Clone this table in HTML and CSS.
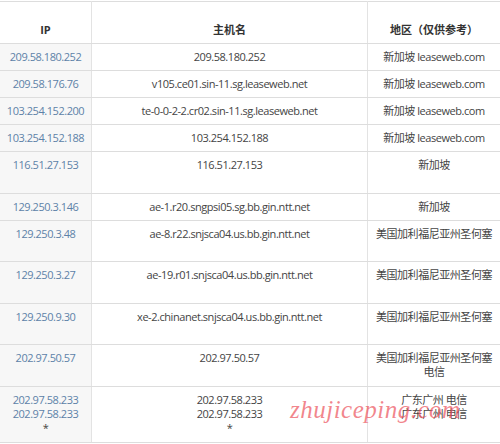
FILE: index.html
```html
<!DOCTYPE html>
<html lang="zh-CN">
<head>
<meta charset="utf-8">
<title>路由追踪</title>
<link rel="stylesheet" href="styles.css">
</head>
<body>
<div class="wrap">
<table class="trace">
  <thead>
    <tr><th class="c-ip">IP</th><th class="c-host">主机名</th><th class="c-loc">地区（仅供参考）</th></tr>
  </thead>
  <tbody>
    <tr><td class="c-ip"><a>209.58.180.252</a></td><td class="c-host">209.58.180.252</td><td class="c-loc">新加坡 leaseweb.com</td></tr>
    <tr><td class="c-ip"><a>209.58.176.76</a></td><td class="c-host">v105.ce01.sin-11.sg.leaseweb.net</td><td class="c-loc">新加坡 leaseweb.com</td></tr>
    <tr><td class="c-ip"><a>103.254.152.200</a></td><td class="c-host">te-0-0-2-2.cr02.sin-11.sg.leaseweb.net</td><td class="c-loc">新加坡 leaseweb.com</td></tr>
    <tr><td class="c-ip"><a>103.254.152.188</a></td><td class="c-host">103.254.152.188</td><td class="c-loc">新加坡 leaseweb.com</td></tr>
    <tr class="tall"><td class="c-ip"><a>116.51.27.153</a></td><td class="c-host">116.51.27.153</td><td class="c-loc">新加坡</td></tr>
    <tr><td class="c-ip"><a>129.250.3.146</a></td><td class="c-host">ae-1.r20.sngpsi05.sg.bb.gin.ntt.net</td><td class="c-loc">新加坡</td></tr>
    <tr class="tall"><td class="c-ip"><a>129.250.3.48</a></td><td class="c-host">ae-8.r22.snjsca04.us.bb.gin.ntt.net</td><td class="c-loc">美国加利福尼亚州圣何塞</td></tr>
    <tr class="tall"><td class="c-ip"><a>129.250.3.27</a></td><td class="c-host">ae-19.r01.snjsca04.us.bb.gin.ntt.net</td><td class="c-loc">美国加利福尼亚州圣何塞</td></tr>
    <tr class="tall"><td class="c-ip"><a>129.250.9.30</a></td><td class="c-host">xe-2.chinanet.snjsca04.us.bb.gin.ntt.net</td><td class="c-loc">美国加利福尼亚州圣何塞</td></tr>
    <tr class="tall"><td class="c-ip"><a>202.97.50.57</a></td><td class="c-host">202.97.50.57</td><td class="c-loc">美国加利福尼亚州圣何塞<br>电信</td></tr>
    <tr class="triple"><td class="c-ip"><a>202.97.58.233</a><br><a>202.97.58.233</a><br>*</td><td class="c-host">202.97.58.233<br>202.97.58.233<br>*</td><td class="c-loc">广东广州 电信<br>广东广州 电信</td></tr>
  </tbody>
</table>
<span class="watermark">zhujiceping.com</span>
</div>
</body>
</html>
```

FILE: styles.css
```css
html, body {
  margin: 0;
  padding: 0;
  background: #ffffff;
}
body {
  font-family: "Open Sans", "Noto Sans CJK SC", sans-serif;
  font-size: 11px;
  letter-spacing: -0.45px;
  color: #444444;
}
.wrap {
  position: relative;
  width: 500px;
  padding-top: 1px;
}
.trace {
  width: 500px;
  border-collapse: collapse;
  table-layout: fixed;
}
.trace th,
.trace td {
  border-top: 1px solid #dddddd;
  border-bottom: 1px solid #dddddd;
  text-align: center;
  vertical-align: top;
  line-height: 14px;
  padding: 6px 4px;
  white-space: nowrap;
}
.trace th {
  font-weight: bold;
  color: #333333;
  padding-top: 21px;
  background: #ffffff;
  letter-spacing: 0;
}
.trace .c-ip { width: 83px; border-right: 1px solid #e3e3e3; }
.trace .c-host { width: 267px; border-right: 1px solid #e3e3e3; }
.trace td.c-ip { background: #f7f7f7; }
.trace .tall td { height: 28.5px; }
.trace .triple td { height: 43px; }
.trace a { color: #5d82a8; text-decoration: none; }
.watermark {
  position: absolute;
  left: 290px;
  top: 396px;
  font-family: "Liberation Serif", serif;
  font-style: italic;
  font-size: 25px;
  color: rgba(236, 80, 90, 0.7);
  letter-spacing: 0.5px;
  pointer-events: none;
}
```
